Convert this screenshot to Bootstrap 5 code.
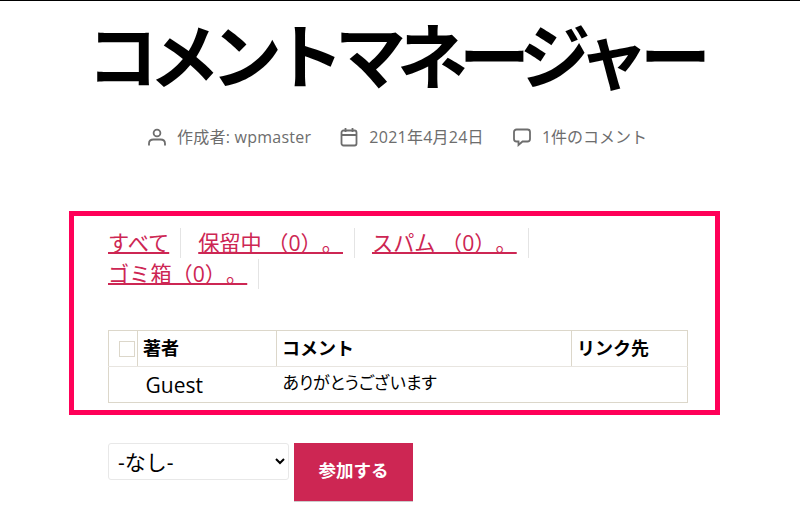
<!DOCTYPE html>
<html lang="ja"><head><meta charset="utf-8">
<link href="https://cdn.jsdelivr.net/npm/bootstrap@5.3.0/dist/css/bootstrap.min.css" rel="stylesheet">
<style>
html,body{height:518px;overflow:hidden}
body{font-family:"Open Sans","Noto Sans CJK JP",sans-serif;color:#000;background:#fff;text-spacing-trim:space-all}
.topline{height:1px;background:#000}
.pagewrap{width:651px;margin:0 auto 0 69px}
.ttl{font-family:"Noto Sans CJK JP",sans-serif;font-size:71px;font-weight:700;line-height:100px;margin:0;padding-top:1px;letter-spacing:-9px;text-align:center;height:106px;white-space:nowrap}
.meta{font-size:16px;color:#6d6d6d;height:24px;margin-top:18px;gap:28px;padding-left:5px}
.meta span{gap:10px}
.meta .wider{letter-spacing:.25px}
.meta svg{width:20px;height:20px;flex:none}
.redbox{border:5px solid #ff0058;margin-top:62px;height:204px;padding:12px 34px 0}
.subs{font-size:21.2px;line-height:30.5px;height:102px;margin:0;padding:0;list-style:none}
.subs li{display:inline-block;margin:0;padding-right:11px;margin-right:17px;border-right:1px solid #e4e4e4;height:30px}
.subs a{color:#cd2653;text-decoration:underline;text-decoration-thickness:2px}
.wptable{width:580px;border:1px solid #dcd7ca;border-collapse:collapse;table-layout:fixed;font-size:18px}
.wptable th,.wptable td{padding:0 5px;vertical-align:middle;color:#000}
.wptable tr{height:36px}
.wptable th{font-weight:700;border-left:1px solid #dcd7ca;border-bottom:1px solid #e8e5e0}
.wptable th:first-child{border-left:0}
.cbox{display:block;width:16px;height:16px;border:1px solid #dcd7ca;margin-left:5px}
.guest{font-size:21px;padding:3px 5px 0 8px!important}
.greet{font-size:17px;font-feature-settings:"palt";padding:0 5px 3px 6px!important}
.actions{padding:28px 0 0 39px;gap:5px}
.pick{width:181px;height:37px;font-size:21px;border:1px solid #e8e8e8;border-radius:3px;padding:0 5px;background-color:#fff}
.joinbtn{width:119px;height:58px;background:#cd2653;color:#fff;font-weight:700;font-size:17.5px;border:0;border-radius:0;padding:0 0 3px;box-shadow:0 1px 0 #ccc}
.joinbtn:hover{background:#cd2653;color:#fff}
</style></head>
<body>
<div class="topline"></div>
<div class="pagewrap">
<h1 class="ttl">コメントマネージャー</h1>
<div class="meta d-flex justify-content-center align-items-center">
<span class="wider d-flex align-items-center"><svg viewBox="0 0 20 20" fill="none" stroke="#6d6d6d" stroke-width="1.8"><circle cx="10" cy="6" r="3.400"/><path d="M2 18.500v-2c0-2.500 2-4 4.500-4h7c2.500 0 4.500 1.500 4.500 4v2"/></svg>作成者: wpmaster</span>
<span class="wider d-flex align-items-center"><svg viewBox="0 0 20 20" fill="none" stroke="#6d6d6d" stroke-width="1.8"><rect x="2.500" y="3.500" width="15" height="15" rx="2"/><path d="M2.500 8h15M6.500 1v4M13.500 1v4"/></svg>2021年4月24日</span>
<span class="d-flex align-items-center"><svg viewBox="0 0 20 20" fill="none" stroke="#6d6d6d" stroke-width="1.8"><path d="M4.500 2.500h11a2.500 2.500 0 0 1 2.500 2.500v7a2.500 2.500 0 0 1-2.500 2.500h-5L6.500 18v-3.500h-2A2.500 2.500 0 0 1 2 12V5a2.500 2.500 0 0 1 2.500-2.500z"/></svg>1件のコメント</span>
</div>
<div class="redbox">
<ul class="subs">
<li><a href="#">すべて</a></li><li><a href="#">保留中 （0）。</a></li><li><a href="#">スパム （0）。</a></li><li><a href="#">ゴミ箱（0）。</a></li>
</ul>
<table class="wptable">
<colgroup><col style="width:29px"><col style="width:139px"><col style="width:295px"><col></colgroup>
<tr><th><span class="cbox"></span></th><th>著者</th><th>コメント</th><th>リンク先</th></tr>
<tr><td></td><td class="guest">Guest</td><td class="greet">ありがとうございます</td><td></td></tr>
</table>
</div>
<div class="actions d-flex align-items-start">
<select class="pick"><option>-なし-</option></select>
<button class="btn joinbtn">参加する</button>
</div>
</div>
</body></html>
